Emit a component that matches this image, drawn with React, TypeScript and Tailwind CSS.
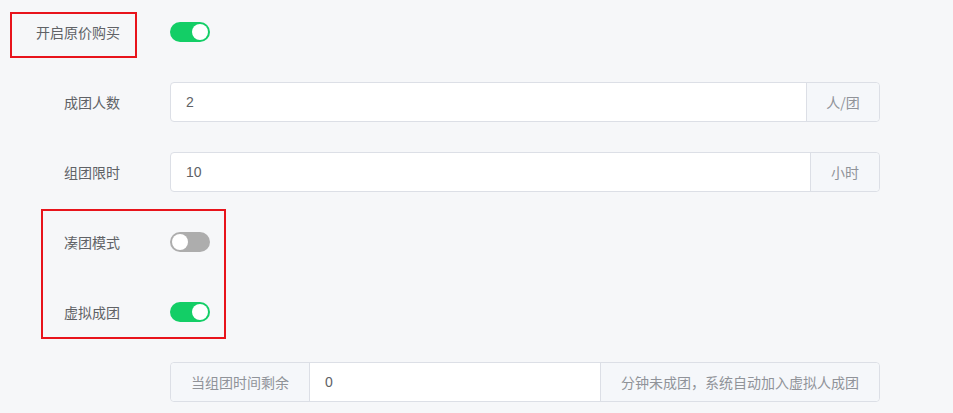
import React from "react";

const font = { fontFamily: '"Noto Sans CJK SC", "Noto Sans", sans-serif' };

function Toggle({ on }: { on: boolean }) {
  return (
    <div
      className={`flex h-5 w-10 items-center rounded-full p-[2px] ${
        on ? "justify-end bg-[#13ce66]" : "justify-start bg-[#adadad]"
      }`}
    >
      <div className="h-4 w-4 rounded-full bg-white" />
    </div>
  );
}

function Row({ label, children }: { label?: string; children: React.ReactNode }) {
  return (
    <div className="flex h-10 items-center">
      <div className="w-[170px] shrink-0 pr-[50px] text-right text-[14px] text-[#606266]">{label}</div>
      <div className="flex flex-1 items-center">{children}</div>
    </div>
  );
}

function InputAppend({ value, append, w }: { value: string; append: string; w: string }) {
  return (
    <div className="flex h-10 w-full rounded border border-[#dcdfe6] bg-white">
      <div className="flex flex-1 items-center px-[15px] text-[14px] text-[#606266]" style={{ fontFamily: '"Liberation Sans", "Noto Sans CJK SC", sans-serif' }}>
        {value}
      </div>
      <div className={`flex items-center justify-center rounded-r border-l border-[#dcdfe6] bg-[#f5f7fa] text-[14px] text-[#909399] ${w}`}>
        {append}
      </div>
    </div>
  );
}

export default function App() {
  return (
    <div className="relative h-[413px] w-[953px] overflow-hidden bg-[#f6f7f9]" style={font}>
      <div className="flex flex-col gap-[30px] pt-3 pr-[73px]">
        <Row label="开启原价购买">
          <Toggle on />
        </Row>
        <Row label="成团人数">
          <InputAppend value="2" append="人/团" w="w-[73px]" />
        </Row>
        <Row label="组团限时">
          <InputAppend value="10" append="小时" w="w-[69px]" />
        </Row>
        <Row label="凑团模式">
          <Toggle on={false} />
        </Row>
        <Row label="虚拟成团">
          <Toggle on />
        </Row>
        <Row>
          <div className="flex h-10 w-full rounded border border-[#dcdfe6] bg-white">
            <div className="flex items-center rounded-l border-r border-[#dcdfe6] bg-[#f5f7fa] px-5 text-[14px] text-[#909399]">
              当组团时间剩余
            </div>
            <div className="flex flex-1 items-center px-[15px] text-[14px] text-[#606266]" style={{ fontFamily: '"Liberation Sans", "Noto Sans CJK SC", sans-serif' }}>
              0
            </div>
            <div className="flex w-[279px] items-center rounded-r border-l border-[#dcdfe6] bg-[#f5f7fa] px-5 text-[14px] text-[#909399]">
              分钟未成团，系统自动加入虚拟人成团
            </div>
          </div>
        </Row>
      </div>
      <div className="pointer-events-none absolute left-[10px] top-[12px] h-[46px] w-[127px] border-2 border-[#e8141c]" />
      <div className="pointer-events-none absolute left-[41px] top-[209px] h-[130px] w-[185px] border-2 border-[#e8141c]" />
    </div>
  );
}
